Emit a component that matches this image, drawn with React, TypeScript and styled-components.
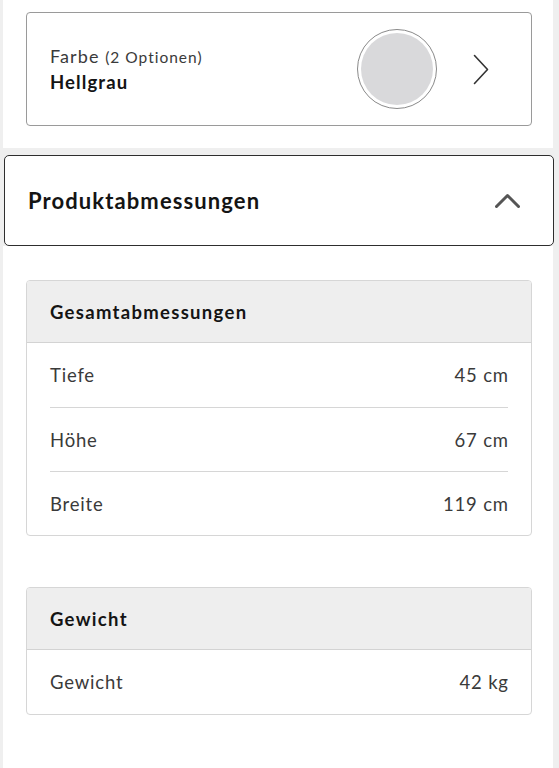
import React from "react";
import styled, { createGlobalStyle } from "styled-components";

const GlobalStyle = createGlobalStyle`
  html, body {
    margin: 0;
    padding: 0;
    background: #efefef;
  }
  body {
    font-family: Lato, "Open Sans", Arial, sans-serif;
    color: #222;
    -webkit-font-smoothing: antialiased;
  }
  * { box-sizing: border-box; }
`;

const Page = styled.div`
  width: 559px;
  min-height: 768px;
  padding-left: 3px;
  display: flex;
  flex-direction: column;
`;

const Panel = styled.section`
  width: 550px;
  background: #fff;
`;

const VariantPanel = styled(Panel)`
  padding: 12px 21px 22px 23px;
`;

const VariantCard = styled.button`
  all: unset;
  box-sizing: border-box;
  width: 506px;
  height: 114px;
  border: 1px solid #9a9a9a;
  border-radius: 4px;
  display: flex;
  align-items: center;
  padding: 0 42px 0 23px;
  cursor: pointer;
`;

const VariantText = styled.div`
  flex: 1;
  display: flex;
  flex-direction: column;
  gap: 3px;
`;

const VariantLabel = styled.span`
  font-size: 18px;
  color: #3a3a3a;
  font-weight: 400;
  line-height: 22px;
  letter-spacing: 1.1px;
`;

const VariantCount = styled.span`
  font-size: 15.5px;
  letter-spacing: 1px;
`;

const VariantValue = styled.span`
  font-size: 18.5px;
  font-weight: 700;
  color: #141414;
  line-height: 22px;
  letter-spacing: 1.1px;
`;

const Swatch = styled.span<{ $color: string }>`
  width: 80px;
  height: 80px;
  border-radius: 50%;
  border: 1px solid #8a8a8a;
  padding: 3px;
  margin-right: 36px;
  display: flex;
  &::after {
    content: "";
    flex: 1;
    border-radius: 50%;
    background: ${(p) => p.$color};
  }
`;

const AccordionHeader = styled.button`
  all: unset;
  box-sizing: border-box;
  margin: 7px 0 0 1px;
  width: 550px;
  height: 91px;
  background: #fff;
  border: 1px solid #2e2e2e;
  border-radius: 5px;
  display: flex;
  align-items: center;
  justify-content: space-between;
  padding: 0 33px 0 23px;
  cursor: pointer;
`;

const AccordionTitle = styled.h2`
  margin: 0;
  font-size: 22px;
  font-weight: 700;
  color: #141414;
  letter-spacing: 1.1px;
`;

const ContentPanel = styled(Panel)`
  flex: 1;
  padding: 34px 21px 40px 23px;
  display: flex;
  flex-direction: column;
  gap: 51px;
`;

const SpecCard = styled.div`
  width: 506px;
  border: 1px solid #d6d6d6;
  border-radius: 4px;
  overflow: hidden;
`;

const SpecHeader = styled.div`
  height: 62px;
  background: #eeeeee;
  border-bottom: 1px solid #d3d3d3;
  display: flex;
  align-items: center;
  padding: 0 23px;
  font-size: 18.5px;
  font-weight: 700;
  color: #141414;
  letter-spacing: 1.3px;
`;

const SpecList = styled.div`
  padding: 0 23px;
`;

const SpecRow = styled.div`
  height: 64px;
  display: flex;
  align-items: center;
  justify-content: space-between;
  font-size: 18.5px;
  color: #3a3a3a;
  letter-spacing: 0.8px;
  & + & {
    border-top: 1px solid #d6d6d6;
  }
`;

const SpecValue = styled.span`
  margin-right: -0.8px;
`;

const Chevron = ({ dir }: { dir: "right" | "up" }) =>
  dir === "right" ? (
    <svg width="16" height="31" viewBox="0 0 16 31" fill="none">
      <path d="M1.5 1.5 L14.5 15.5 L1.5 29.5" stroke="#333" strokeWidth="1.6" strokeLinecap="round" strokeLinejoin="round" />
    </svg>
  ) : (
    <svg width="25" height="16" viewBox="0 0 25 16" fill="none">
      <path d="M1.5 13.5 L12.5 2.5 L23.5 13.5" stroke="#555" strokeWidth="3" strokeLinecap="round" strokeLinejoin="round" />
    </svg>
  );

const dimensions = [
  { label: "Tiefe", value: "45 cm" },
  { label: "Höhe", value: "67 cm" },
  { label: "Breite", value: "119 cm" },
];

const weights = [{ label: "Gewicht", value: "42 kg" }];

const Spec = ({ title, rows }: { title: string; rows: { label: string; value: string }[] }) => (
  <SpecCard>
    <SpecHeader>{title}</SpecHeader>
    <SpecList>
      {rows.map((r) => (
        <SpecRow key={r.label}>
          <span>{r.label}</span>
          <SpecValue>{r.value}</SpecValue>
        </SpecRow>
      ))}
    </SpecList>
  </SpecCard>
);

export default function App() {
  return (
    <>
      <GlobalStyle />
      <Page>
        <VariantPanel>
          <VariantCard>
            <VariantText>
              <VariantLabel>
                Farbe <VariantCount>(2 Optionen)</VariantCount>
              </VariantLabel>
              <VariantValue>Hellgrau</VariantValue>
            </VariantText>
            <Swatch $color="#d9d9db" />
            <Chevron dir="right" />
          </VariantCard>
        </VariantPanel>
        <AccordionHeader>
          <AccordionTitle>Produktabmessungen</AccordionTitle>
          <Chevron dir="up" />
        </AccordionHeader>
        <ContentPanel>
          <Spec title="Gesamtabmessungen" rows={dimensions} />
          <Spec title="Gewicht" rows={weights} />
        </ContentPanel>
      </Page>
    </>
  );
}
